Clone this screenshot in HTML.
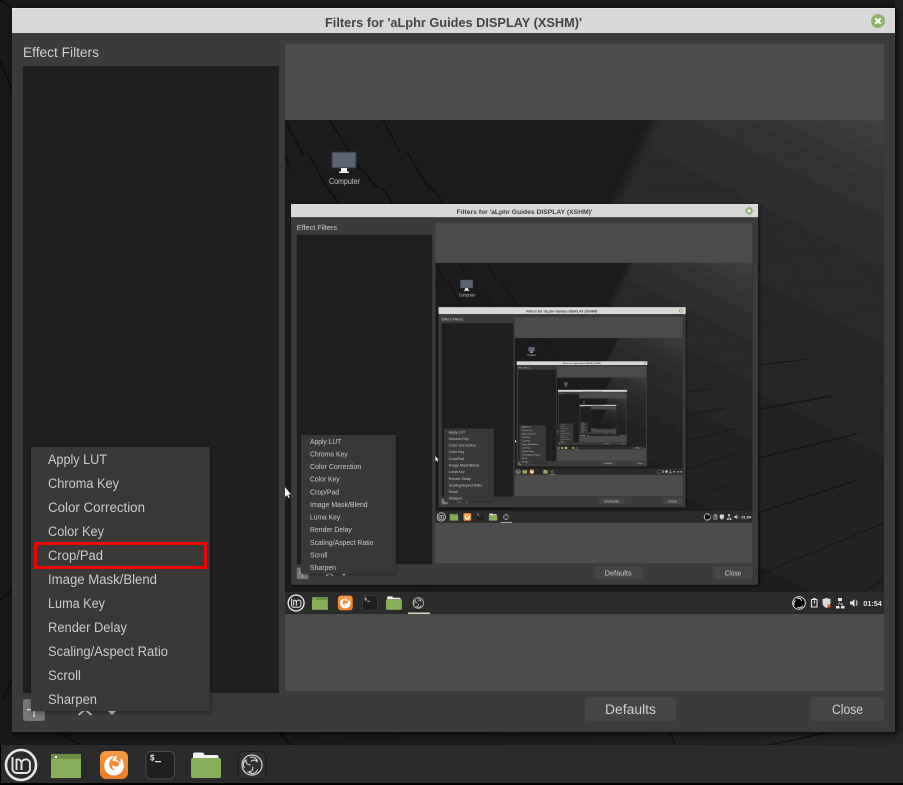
<!DOCTYPE html>
<html lang="en">
<head>
<meta charset="utf-8">
<title>Filters for 'aLphr Guides DISPLAY (XSHM)'</title>
<style>
html,body{margin:0;padding:0;width:903px;height:785px;overflow:hidden;background:#181818}
svg{display:block}
text{font-family:"Liberation Sans",sans-serif}
</style>
</head>
<body>
<svg xmlns="http://www.w3.org/2000/svg" width="903" height="785" viewBox="0 0 903 785">
<defs>
<linearGradient id="wall" gradientUnits="userSpaceOnUse" x1="884" y1="120" x2="640" y2="592">
<stop offset="0" stop-color="#404040"/>
<stop offset=".15" stop-color="#303030"/>
<stop offset=".32" stop-color="#2a2a2a"/>
<stop offset=".47" stop-color="#262626"/>
<stop offset=".83" stop-color="#202020"/>
<stop offset="1" stop-color="#1c1c1c"/>
</linearGradient>
<linearGradient id="below" gradientUnits="userSpaceOnUse" x1="300" y1="0" x2="903" y2="0">
<stop offset="0" stop-color="#181818"/>
<stop offset=".5" stop-color="#1c1c1c"/>
<stop offset="1" stop-color="#262626"/>
</linearGradient>
<linearGradient id="ff" x1="0" y1="0" x2="0" y2="1">
<stop offset="0" stop-color="#f79a3e"/>
<stop offset="1" stop-color="#ee7a2c"/>
</linearGradient>
<clipPath id="wc"><rect x="285" y="120" width="599" height="472"/></clipPath>
<filter id="sh" x="-5%" y="-5%" width="110%" height="110%"><feGaussianBlur stdDeviation="2"/></filter>
<filter id="soft" x="-10%" y="-10%" width="120%" height="120%"><feGaussianBlur stdDeviation="5"/></filter>

<g id="icons">
<circle cx="21" cy="765" r="15" fill="none" stroke="#e6e6e6" stroke-width="2.6"/>
<path d="M12.500 757V769a4 4 0 0 0 4 4H26a4 4 0 0 0 4-4V763a3.700 3.700 0 0 0-4-3.500 4 4 0 0 0-4.500 3.500V770M21.500 763a3.700 3.700 0 0 0-4-3.500 3.500 3.500 0 0 0-1 .2V770" fill="none" stroke="#e6e6e6" stroke-width="1.900"/>
<rect x="51" y="754" width="30" height="24" fill="#88ad5b"/>
<rect x="51" y="754" width="30" height="5" fill="#6b8e47"/>
<rect x="55" y="756" width="2" height="2" fill="#fff"/>
<rect x="100" y="751" width="28" height="28" rx="6" fill="url(#ff)"/>
<path d="M114 756c-5.500 0-9.800 4.300-9.800 9.700s4.300 9.700 9.800 9.700 9.800-4.300 9.800-9.700c0-3-1-5.800-3.400-8.200.6 2.200.4 4-.6 5.200-.9-1.600-2.400-2.800-4.200-3.300 1-1.200 1.200-2.500 1-3.800-2.400 1.100-3.800 2.700-4.300 4.600 1.300.9 3.400.7 5.200 1.300 1.800.7 2.300 2.600 1 4-1.500 1.600-4.500 1.300-5.900-.6-.8 2.400.4 4.900 3.100 5.400-3.200.3-6.200-2-6.500-5.400-.3-3.300 1.800-6.500 4.600-8.500z" fill="#fff"/>
<rect x="146" y="751.500" width="28.500" height="27.500" rx="5" fill="#1f1f1f" stroke="#4a4a4a"/>
<text x="150" y="760.500" font-size="8" font-weight="bold" fill="#eee">$</text>
<rect x="155" y="761" width="6" height="1.200" fill="#eee"/>
<path d="M193 758v-3.500q0-2 2-2h7q2 0 2.500 2.500H217q1.500 0 1.500 1.500V758z" fill="#f2f2f2"/>
<path d="M191 760q0-2 2-2h26q2 0 2 2v16q0 2-2 2h-26q-2 0-2-2z" fill="#88ad5b"/>
<rect x="238" y="751.500" width="28" height="27.500" rx="6" fill="#2f2f2f" stroke="#1a1a1a"/>
<circle cx="252" cy="765" r="10" fill="none" stroke="#d4d4d4" stroke-width="1.200"/>
<path d="M250 757.500a5.500 5.500 0 0 1 7.500 4.500 4 4 0 0 0-6.500 -.5M244.500 768a5.500 5.500 0 0 1 1.500-8 4 4 0 0 0 4.500 4.800M257.500 769.500a5.500 5.500 0 0 1-9 2.500 4 4 0 0 0 4-5.300" fill="none" stroke="#d4d4d4" stroke-width="1.100"/>
</g>

<g id="w">
<rect x="13" y="9" width="885" height="726" fill="#000" opacity=".55" filter="url(#sh)"/>
<rect x="12" y="8" width="883" height="724" fill="#3b3b3b"/>
<rect x="12" y="9" width="883" height="24" fill="#d8d8d8"/>
<rect x="12" y="8" width="883" height="1" fill="#e6e6e6"/>
<text x="325" y="27" font-size="13" font-weight="bold" fill="#444" textLength="257" lengthAdjust="spacingAndGlyphs">Filters for 'aLphr Guides DISPLAY (XSHM)'</text>
<circle cx="878" cy="21" r="7" fill="#8fb46f"/>
<path d="M875.300 18.300l5.400 5.400M880.700 18.300l-5.400 5.400" stroke="#fff" stroke-width="2"/>
<text x="23" y="57" font-size="13.500" fill="#cfcfcf" textLength="76" lengthAdjust="spacingAndGlyphs">Effect Filters</text>
<rect x="23" y="66" width="256" height="627" fill="#1f1f1f"/>
<rect x="285" y="44" width="599" height="647" fill="#4b4b4b"/>

<rect x="285" y="120" width="599" height="472" fill="#1b1b1b"/>
<g clip-path="url(#wc)">
<polygon points="665,100 910,100 910,610 420,610" fill="url(#wall)" filter="url(#soft)"/>
<g stroke="#0d0d0d" stroke-width="1.300" fill="none">
<path d="M285 120L303 155M308 153L330 193M330 120L357 165M357 165L378 188M383 120L400 152M407 152L430 190M382 187L392 203M430 185L443 203M330 190L338 203M285 155L291 170"/>
</g>
<g stroke="#151515" fill="none">
<path d="M760 365L808 359" stroke-width="1.100"/>
<path d="M760 409L832 396" stroke-width="1.400"/>
<path d="M758 458L857 434" stroke-width="1.500"/>
<path d="M758 513L858 480" stroke-width="1.500"/>
<path d="M758 575L884 523" stroke-width="1"/>
<path d="M862 592L884 580" stroke-width="1"/>
</g>
<g stroke="#000" stroke-opacity=".07" fill="none" stroke-width="1">
<path d="M808 359L884 343M832 396L884 383M857 434L884 425M858 480L884 471M763 327L884 308M763 290L884 278M763 258L884 246M760 225L884 218M660 141L884 126M650 165L884 153M650 190L884 186"/>
<path d="M690 120L780 260M730 120L840 290M770 120L884 300M810 120L884 240M850 120L884 170M770 230L884 420M780 300L884 470"/>
</g>
</g>

<rect x="332" y="152" width="24" height="16" fill="#5d6472" stroke="#2c3038" stroke-width="1"/>
<rect x="341" y="168" width="6" height="3.500" fill="#f0f0f0"/>
<rect x="339" y="171.500" width="10" height="1.500" fill="#f0f0f0"/>
<text x="329" y="184" font-size="8" fill="#c4c8cc" textLength="31" lengthAdjust="spacingAndGlyphs">Computer</text>

<rect x="285" y="592" width="599" height="22" fill="#2b2b2b"/>
<use href="#icons" transform="translate(285 198.300) scale(.529)"/>
<rect x="408" y="612.500" width="22" height="1.500" fill="#cfd8c0"/>
<circle cx="799" cy="603" r="6.300" fill="#000" stroke="#e0e0e0" stroke-width="1"/>
<path d="M797 598.500a3 3 0 0 1 4.500 2.500M794.500 605a3 3 0 0 1 1-4.500M802.500 605.500a3 3 0 0 1-5 1.500" fill="none" stroke="#e0e0e0" stroke-width="1"/>
<path d="M811.500 599.500h5.500v7.500h-5.500zM813 598.500h2.500" fill="none" stroke="#e4e4e4" stroke-width="1.100"/>
<rect x="814" y="600.500" width="1" height="3" fill="#e4e4e4"/>
<path d="M822.500 599l4-1 4 1v4q0 3-4 5-4-2-4-5z" fill="#d8d8d8"/>
<rect x="827.500" y="604.500" width="3" height="3" fill="#e95420"/>
<path d="M838 598h4v3h-4zM836 606h3.500v2.500H836zM841 606h3.500v2.500H841zM840 601v2.500h-2V606M840 603.500h2.500V606" fill="#e4e4e4"/>
<path d="M850 601.500h2l2.500-2.500v8l-2.500-2.500h-2z" fill="#e4e4e4"/>
<path d="M856 600.500a3.500 3.500 0 0 1 0 5" fill="none" stroke="#e4e4e4" stroke-width="1"/>
<text x="863.300" y="606" font-size="7.500" font-weight="bold" fill="#e4e4e4" textLength="18.500" lengthAdjust="spacingAndGlyphs">01:54</text>

<rect x="23" y="699" width="22" height="22" rx="3" fill="#777"/>
<rect x="27" y="709" width="8" height="1.300" fill="#e8e8e8"/>
<rect x="33.500" y="708" width="1.300" height="9" fill="#e8e8e8"/>

<rect x="585" y="697" width="91" height="24" rx="3" fill="#454545"/>
<text x="605" y="714" font-size="13.500" fill="#cfcfcf" textLength="51" lengthAdjust="spacingAndGlyphs">Defaults</text>
<rect x="811" y="697" width="73" height="24" rx="3" fill="#454545"/>
<text x="832" y="714" font-size="13.500" fill="#cfcfcf" textLength="31" lengthAdjust="spacingAndGlyphs">Close</text>

<rect x="31" y="448" width="180" height="265" fill="#000" opacity=".35" filter="url(#sh)"/>
<path d="M78.500 715l6.500-5.500 6.500 5.500" fill="none" stroke="#a8a8a8" stroke-width="2"/>
<path d="M108 711h8l-4 4z" fill="#a8a8a8"/>
<rect x="31" y="447" width="179" height="264" fill="#383838"/>
<g font-size="13.500" fill="#cbcbcb">
<text x="48" y="464" textLength="59" lengthAdjust="spacingAndGlyphs">Apply LUT</text>
<text x="48" y="488" textLength="71" lengthAdjust="spacingAndGlyphs">Chroma Key</text>
<text x="48" y="512" textLength="97" lengthAdjust="spacingAndGlyphs">Color Correction</text>
<text x="48" y="536" textLength="56" lengthAdjust="spacingAndGlyphs">Color Key</text>
<text x="48" y="560" textLength="55" lengthAdjust="spacingAndGlyphs">Crop/Pad</text>
<text x="48" y="584" textLength="109" lengthAdjust="spacingAndGlyphs">Image Mask/Blend</text>
<text x="48" y="608" textLength="57" lengthAdjust="spacingAndGlyphs">Luma Key</text>
<text x="48" y="632" textLength="79" lengthAdjust="spacingAndGlyphs">Render Delay</text>
<text x="48" y="656" textLength="120" lengthAdjust="spacingAndGlyphs">Scaling/Aspect Ratio</text>
<text x="48" y="680" textLength="33" lengthAdjust="spacingAndGlyphs">Scroll</text>
<text x="48" y="704" textLength="49" lengthAdjust="spacingAndGlyphs">Sharpen</text>
</g>

<path d="M285 487v10l2-2 1.500 3 1.300-.7-1.500-2.800h2.700z" fill="#f4f4f4"/>
</g>

<g id="l5"><use href="#w"/></g>
<g id="l4"><use href="#w"/><use href="#l5" transform="matrix(.529 0 0 .526 284.650 199.800)"/></g>
<g id="l3"><use href="#w"/><use href="#l4" transform="matrix(.529 0 0 .526 284.650 199.800)"/></g>
<g id="l2"><use href="#w"/><use href="#l3" transform="matrix(.529 0 0 .526 284.650 199.800)"/></g>
<g id="l1"><use href="#w"/><use href="#l2" transform="matrix(.529 0 0 .526 284.650 199.800)"/></g>
</defs>

<rect width="903" height="785" fill="#181818"/>
<g stroke="#0c0c0c" stroke-width="1.500" fill="none">
<path d="M0 0L12 8M0 60L12 90M0 600L12 590M2 700L12 680M60 733L80 745M280 733L290 745"/>
</g>
<rect x="895" y="0" width="8" height="745" fill="#212121"/>
<rect x="300" y="732" width="603" height="13" fill="url(#below)"/>
<path d="M675 745L670 732M770 745L830 732" stroke="#111" stroke-width="1.500" fill="none"/>
<rect x="1" y="745" width="902" height="38" fill="#2b2b2b"/>
<rect x="0" y="745" width="1" height="40" fill="#000"/>
<rect x="0" y="783" width="903" height="2" fill="#000"/>
<use href="#icons"/>

<use href="#w"/>
<use href="#l1" transform="matrix(.529 0 0 .526 284.650 199.800)"/>
<rect x="35.500" y="543.500" width="170" height="24" fill="none" stroke="#f00000" stroke-width="3"/>
</svg>
</body>
</html>
